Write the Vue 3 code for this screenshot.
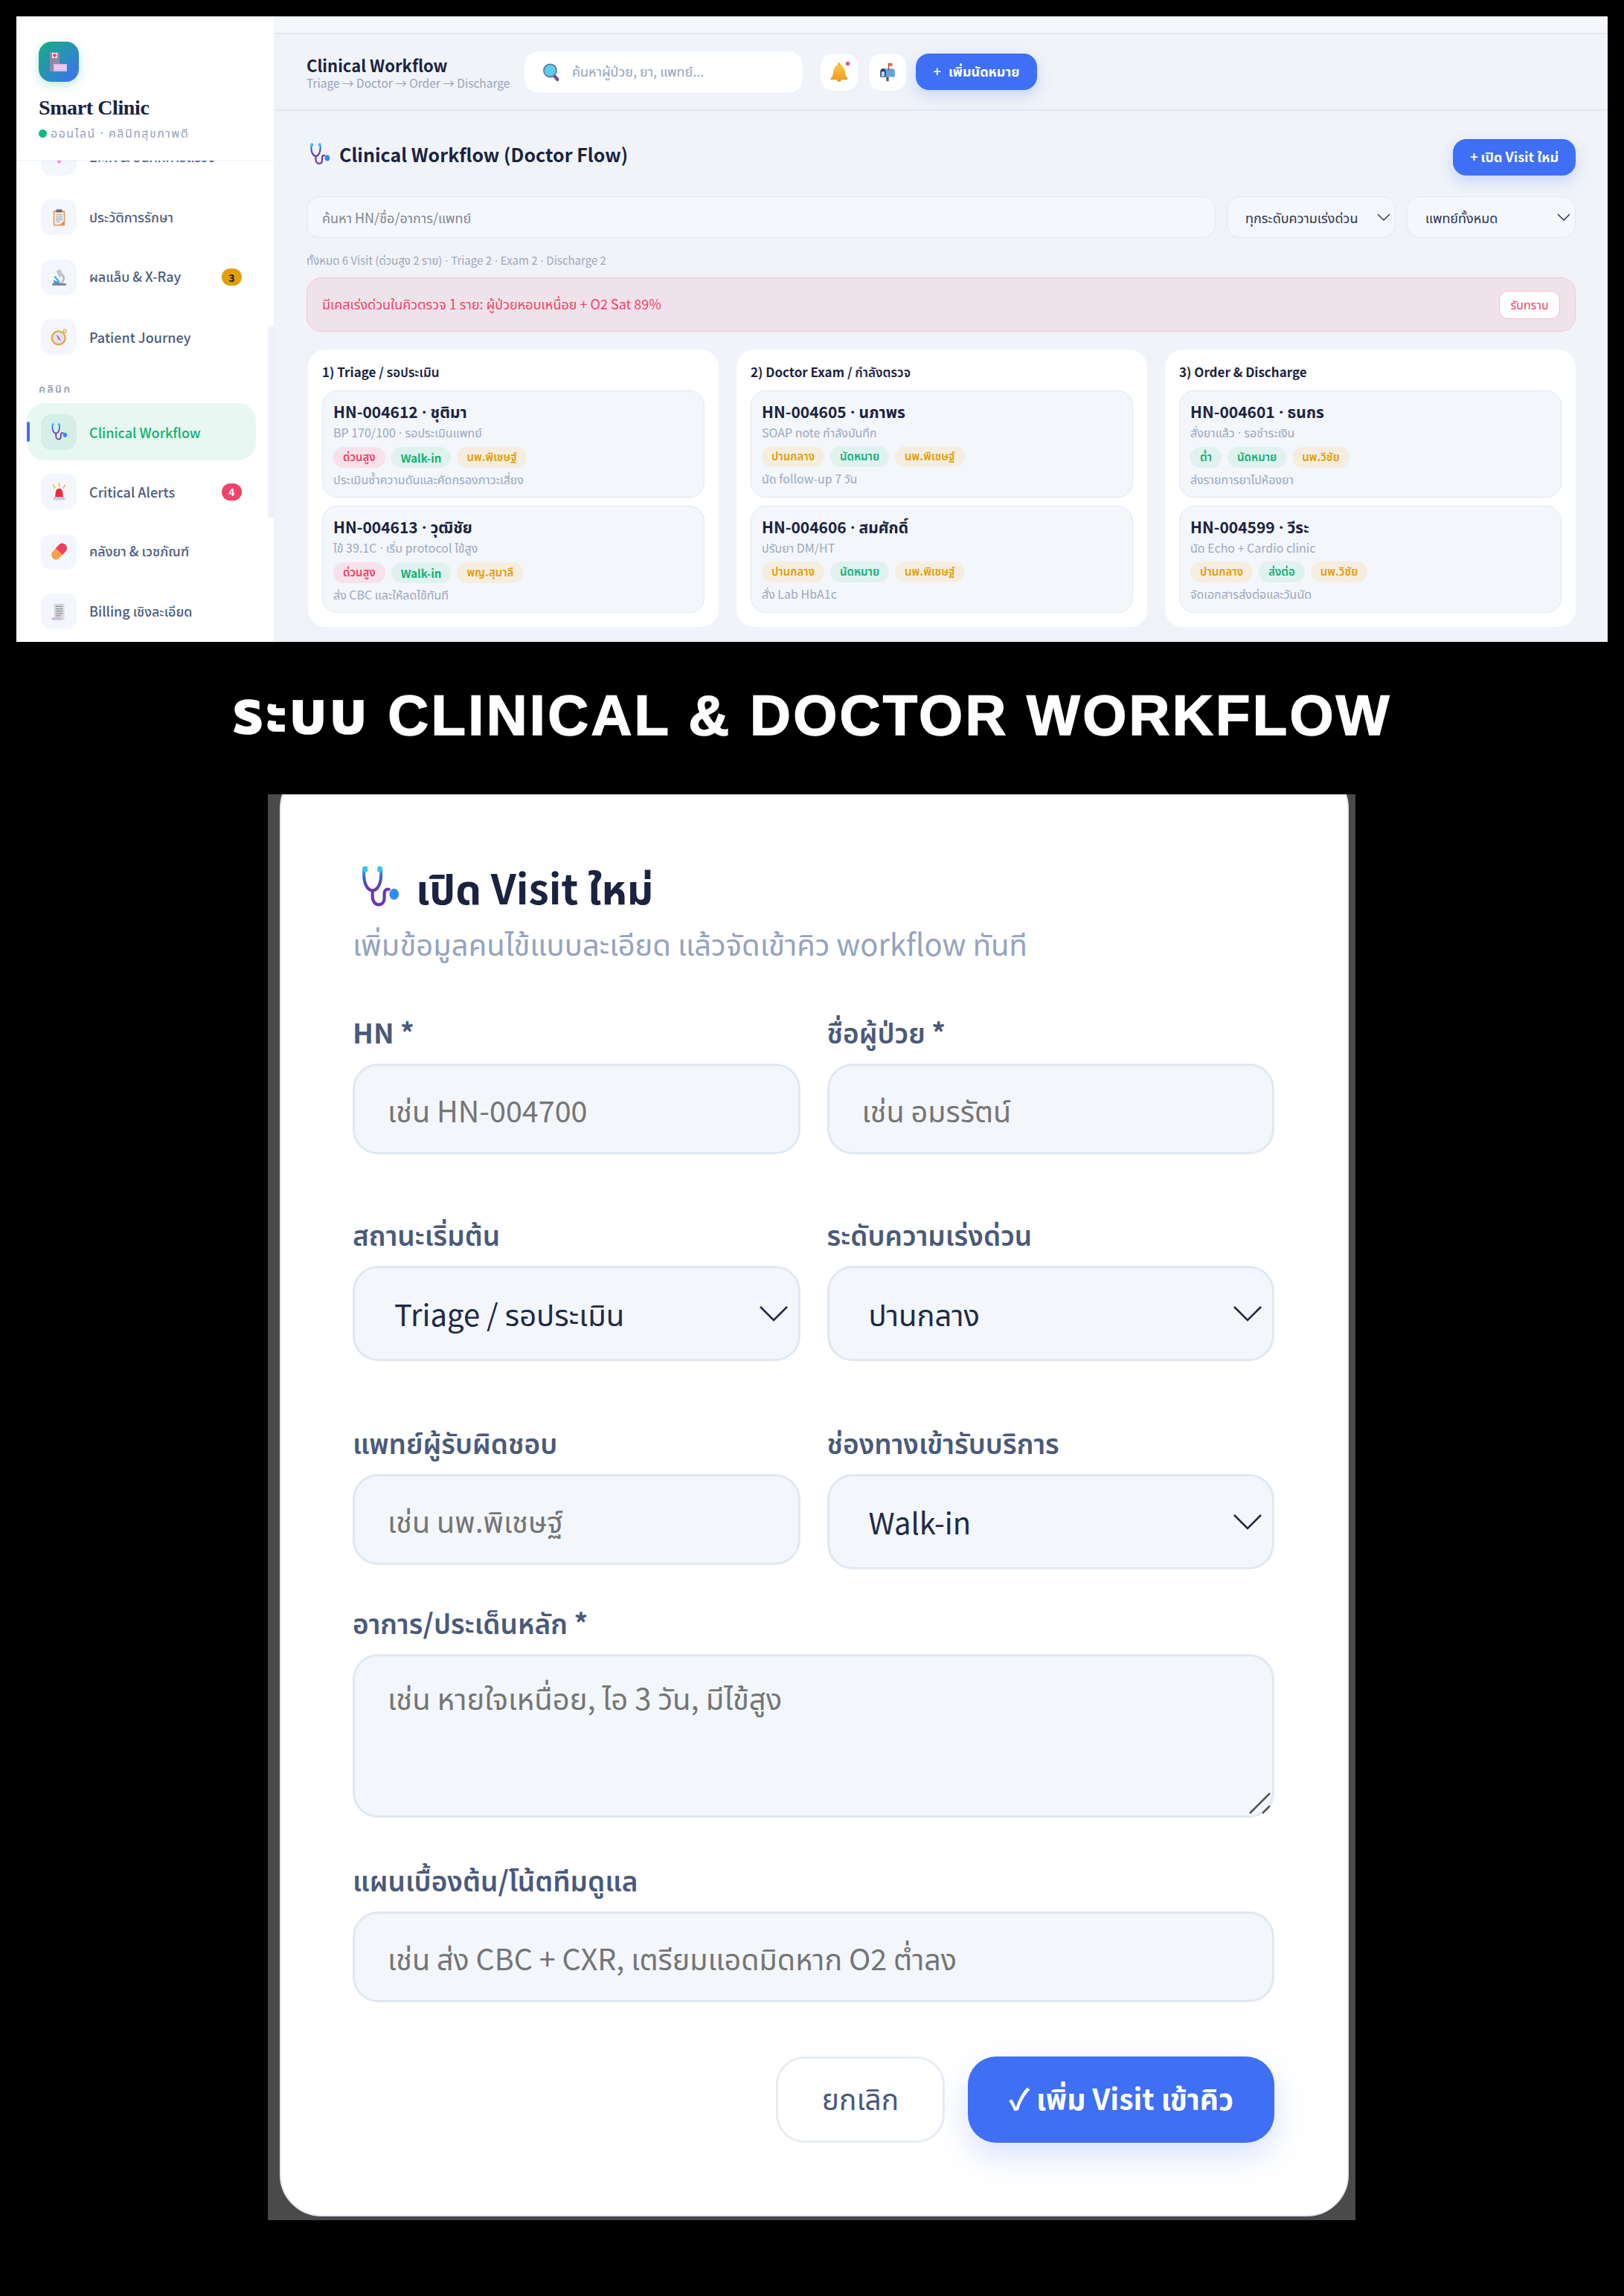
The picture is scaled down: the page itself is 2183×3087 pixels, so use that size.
<template>
  <div class="page">
    <!-- icon sheet -->
    <svg class="sprites" width="0" height="0">
      <defs>
        <linearGradient id="tube" x1="0" y1="0" x2="0" y2="1">
          <stop offset="0" stop-color="#38b6f5" />
          <stop offset="0.4" stop-color="#3c62c8" />
          <stop offset="1" stop-color="#6a35b0" />
        </linearGradient>
        <linearGradient id="bellGrad" x1="0" y1="0" x2="0" y2="1">
          <stop offset="0" stop-color="#fbc94b" />
          <stop offset="1" stop-color="#f49a22" />
        </linearGradient>
        <symbol id="i-steth" viewBox="0 0 32 32">
          <path d="M6 3H4.500C4 9 4.500 14 7 17c2 2.400 5 2.400 7 0 2.500-3 3-8 2.500-14H15" fill="none" stroke="url(#tube)" stroke-width="2.200" />
          <path d="M10.500 19v4c0 3.500 2 6 4.500 6s4-2 4-5v-3c0-2.500 2-4 4-2.500" fill="none" stroke="#6a35b0" stroke-width="2.200" />
          <rect x="4" y="1.500" width="3" height="4" rx="1" fill="#38c0f5" />
          <rect x="14" y="1.500" width="3" height="4" rx="1" fill="#38c0f5" />
          <ellipse cx="26" cy="21.500" rx="3.400" ry="4" fill="#2f8df0" />
        </symbol>
        <symbol id="i-brain" viewBox="0 0 32 32">
          <path d="M5 12c0-6 5-8 11-8s11 2 11 8c0 5-3 8-7 8l-2 6h-4l-2-6c-4 0-7-3-7-8z" fill="#f08ad8" />
        </symbol>
        <symbol id="i-clip" viewBox="0 0 32 32">
          <rect x="6" y="4" width="20" height="26" rx="2" fill="#e09a55" />
          <rect x="8" y="7" width="16" height="21" fill="#f3efe9" />
          <path d="M18 28l6-6v6z" fill="#d98c48" />
          <rect x="11" y="2" width="10" height="5" rx="1" fill="#6b6b78" />
          <path d="M10.500 11h11M10.500 14h11M10.500 17h11M10.500 20h11M10.500 23h7" stroke="#9a9aa8" stroke-width="1.200" />
        </symbol>
        <symbol id="i-scope" viewBox="0 0 32 32">
          <rect x="4" y="27" width="24" height="3.500" rx="1.500" fill="#7d7a96" />
          <path d="M20 9c5 3 7 8 5 13-1 3-3 5-5 5h-4c4-2 7-5 6-10z" fill="#b9b6c8" />
          <rect x="13" y="3" width="8" height="13" rx="3" transform="rotate(-28 17 9)" fill="#c6c3d2" />
          <path d="M6 21l11 4v2H7z" fill="#3aa3e8" />
          <path d="M8 15l8 9" stroke="#3aa3e8" stroke-width="2.500" />
        </symbol>
        <symbol id="i-compass" viewBox="0 0 32 32">
          <circle cx="26" cy="5" r="2.500" fill="none" stroke="#e6a93c" stroke-width="1.600" />
          <circle cx="15" cy="17" r="13" fill="#e8a845" />
          <circle cx="15" cy="17" r="10" fill="#dfe3ee" />
          <path d="M10 11l7 5-2 2z" fill="#8a8a9a" />
          <path d="M20 23l-7-5 2-2z" fill="#e0455a" />
        </symbol>
        <symbol id="i-siren" viewBox="0 0 32 32">
          <path d="M16 1v6M6 4l3 5M26 4l-3 5" stroke="#f0b429" stroke-width="2" stroke-linecap="round" />
          <path d="M9 25l1-9c.500-4 3-6 6-6s5.500 2 6 6l1 9z" fill="#ea2c3f" />
          <rect x="6" y="25" width="20" height="5" rx="1" fill="#d9c7e8" />
        </symbol>
        <symbol id="i-pill" viewBox="0 0 32 32">
          <g transform="rotate(42 16 16)">
            <rect x="8" y="0" width="16" height="32" rx="8" fill="#f7a24a" />
            <path d="M8 16V8a8 8 0 0 1 16 0v8z" fill="#ee3f66" />
          </g>
        </symbol>
        <symbol id="i-bill" viewBox="0 0 32 32">
          <path d="M7 2h18v25c0 2-1 3-3 3H5c2 0 2-1 2-3z" fill="#dcdbe3" />
          <rect x="3" y="26" width="18" height="4" rx="2" fill="#cdb9e0" />
          <path d="M10 7h12M10 11h12M10 15h12M10 19h12M10 23h9" stroke="#8d8d99" stroke-width="1.600" />
        </symbol>
        <symbol id="i-search" viewBox="0 0 32 32">
          <path d="M20 21l7 8" stroke="#7a4a95" stroke-width="6" stroke-linecap="round" />
          <circle cx="14" cy="13" r="11.500" fill="#5ccbec" stroke="#5b6b90" stroke-width="2" />
        </symbol>
        <symbol id="i-bell" viewBox="0 0 32 32">
          <path d="M16 5c-5 0-8 5-8.500 12-.300 3-2 6-3.500 7.500V27h24v-2.500c-1.500-1.500-3.200-4.500-3.500-7.500C24 10 21 5 16 5z" fill="url(#bellGrad)" />
          <circle cx="16" cy="4.500" r="2" fill="#f5ac2c" />
          <path d="M13 27a3 2.500 0 0 0 6 0z" fill="#e68a1c" />
        </symbol>
        <symbol id="i-mail" viewBox="0 0 32 32">
          <rect x="14" y="20" width="4" height="11" fill="#7a4a3a" />
          <path d="M8 10h16c3 0 4 2 4 5v9H8z" fill="#5aa7e4" />
          <path d="M4 15c0-3 2-5 4.500-5S13 12 13 15v9H4z" fill="#1f3f66" />
          <rect x="6" y="15" width="5" height="8" fill="#cfd8e6" />
          <rect x="17" y="1" width="1.600" height="12" fill="#c0392b" />
          <rect x="18" y="1" width="6" height="5" fill="#f06a3c" />
        </symbol>
      </defs>
    </svg>

    <section class="window">
      <aside class="sidebar">
        <div class="brand">
          <div class="logo">
            <svg viewBox="0 0 24 27" width="24" height="27">
              <rect x="0" y="0" width="13" height="26" fill="#8f8aa6" />
              <rect x="3" y="1" width="7" height="7" fill="#f6e9f0" />
              <path d="M6.500 2v5M4 4.500h5" stroke="#e8336e" stroke-width="1.800" />
              <rect x="5" y="16" width="18" height="10" fill="#e6b8e8" />
              <path d="M6 19h16M6 22h16" stroke="#f6e6f8" stroke-width="1.200" />
            </svg>
          </div>
          <div class="brand-name">Smart Clinic</div>
          <div class="brand-status">
            <span class="dot"></span>
            <span>ออนไลน์<span class="sep">{{ ' · ' }}</span>คลินิกสุขภาพดี</span>
          </div>
        </div>
        <nav class="nav">
          <template v-for="item in navItems" :key="item.label">
            <div v-if="item.section" class="nav-section">{{ item.label }}</div>
            <div v-else class="nav-item" :class="{ active: item.active }">
              <span class="nav-icon"><svg width="32" height="32"><use :href="'#' + item.icon" /></svg></span>
              <span class="nav-label">{{ item.label }}</span>
              <span v-if="item.badge" class="nav-badge" :class="item.badgeClass">{{ item.badge }}</span>
            </div>
          </template>
        </nav>
        <div class="scroll-thumb"></div>
      </aside>

      <main class="main">
        <div class="strip"></div>
        <header class="topbar">
          <div class="topbar-title">
            <div class="tb-name">Clinical Workflow</div>
            <div class="tb-sub">Triage → Doctor → Order → Discharge</div>
          </div>
          <div class="search">
            <svg width="24" height="30"><use href="#i-search" /></svg>
            <span>ค้นหาผู้ป่วย, ยา, แพทย์...</span>
          </div>
          <button class="round-btn bell">
            <svg width="30" height="30"><use href="#i-bell" /></svg>
            <i></i>
          </button>
          <button class="round-btn"><svg width="26" height="28"><use href="#i-mail" /></svg></button>
          <button class="add-btn"><b>+</b> เพิ่มนัดหมาย</button>
        </header>

        <div class="content">
          <div class="head-row">
            <h1><svg width="32" height="32"><use href="#i-steth" /></svg>Clinical Workflow (Doctor Flow)</h1>
            <button class="visit-btn">+ เปิด Visit ใหม่</button>
          </div>
          <div class="filters">
            <input class="f-input" placeholder="ค้นหา HN/ชื่อ/อาการ/แพทย์" />
            <select class="f-select"><option>ทุกระดับความเร่งด่วน</option></select>
            <select class="f-select"><option>แพทย์ทั้งหมด</option></select>
          </div>
          <div class="summary">
            <template v-for="(p, i) in split(summary)" :key="i"><span v-if="i" class="sep">{{ ' · ' }}</span>{{ p }}</template>
          </div>
          <div class="alert">
            <span>มีเคสเร่งด่วนในคิวตรวจ 1 ราย: ผู้ป่วยหอบเหนื่อย + O2 Sat 89%</span>
            <button>รับทราบ</button>
          </div>
          <div class="board">
            <div v-for="col in columns" :key="col.title" class="column">
              <div class="col-title">{{ col.title }}</div>
              <div v-for="c in col.cards" :key="c.hn" class="card">
                <div class="card-title">{{ c.hn }}<span class="sep">{{ ' · ' }}</span>{{ c.name }}</div>
                <div class="card-sub">
                  <template v-for="(p, i) in split(c.sub)" :key="i"><span v-if="i" class="sep">{{ ' · ' }}</span>{{ p }}</template>
                </div>
                <div class="tags">
                  <span v-for="t in c.tags" :key="t[0]" class="tag" :class="t[1]">{{ t[0] }}</span>
                </div>
                <div class="card-sub">{{ c.note }}</div>
              </div>
            </div>
          </div>
        </div>
      </main>
    </section>

    <h2 class="banner"><span class="th">ระบบ</span>&nbsp;CLINICAL &amp; DOCTOR WORKFLOW</h2>

    <section class="backdrop">
      <form class="modal" @submit.prevent>
        <div class="modal-title"><svg width="60" height="60"><use href="#i-steth" /></svg>เปิด Visit ใหม่</div>
        <p class="modal-sub">เพิ่มข้อมูลคนไข้แบบละเอียด แล้วจัดเข้าคิว workflow ทันที</p>

        <div class="grid">
          <label class="field row1">
            <span>HN *</span>
            <input placeholder="เช่น HN-004700" />
          </label>
          <label class="field row1">
            <span>ชื่อผู้ป่วย *</span>
            <input placeholder="เช่น อมรรัตน์" />
          </label>
          <label class="field row2">
            <span>สถานะเริ่มต้น</span>
            <select><option>Triage / รอประเมิน</option></select>
          </label>
          <label class="field row2">
            <span>ระดับความเร่งด่วน</span>
            <select><option>ปานกลาง</option></select>
          </label>
          <label class="field row3">
            <span>แพทย์ผู้รับผิดชอบ</span>
            <input placeholder="เช่น นพ.พิเชษฐ์" />
          </label>
          <label class="field row3">
            <span>ช่องทางเข้ารับบริการ</span>
            <select><option>Walk-in</option></select>
          </label>
        </div>

        <label class="field wide">
          <span>อาการ/ประเด็นหลัก *</span>
          <div class="ta-wrap">
            <textarea placeholder="เช่น หายใจเหนื่อย, ไอ 3 วัน, มีไข้สูง"></textarea>
            <svg class="grip" width="32" height="32" viewBox="0 0 32 32">
              <path d="M3 30L30 3M20 30l10-10" stroke="#555" stroke-width="2.500" />
            </svg>
          </div>
        </label>
        <label class="field plan">
          <span>แผนเบื้องต้น/โน้ตทีมดูแล</span>
          <input placeholder="เช่น ส่ง CBC + CXR, เตรียมแอดมิดหาก O2 ต่ำลง" />
        </label>

        <div class="actions">
          <button type="button" class="cancel">ยกเลิก</button>
          <button type="submit" class="submit">✓ เพิ่ม Visit เข้าคิว</button>
        </div>
      </form>
    </section>
  </div>
</template>

<script setup>
const summary = 'ทั้งหมด 6 Visit (ด่วนสูง 2 ราย) · Triage 2 · Exam 2 · Discharge 2'

// the CJK font's middle dot is too wide, so separators get their own span
const split = (text) => text.split(' · ')

const navItems = [
  { label: 'EMR & บันทึกการตรวจ', icon: 'i-brain' },
  { label: 'ประวัติการรักษา', icon: 'i-clip' },
  { label: 'ผลแล็บ & X-Ray', icon: 'i-scope', badge: 3, badgeClass: 'amber' },
  { label: 'Patient Journey', icon: 'i-compass' },
  { label: 'คลินิก', section: true },
  { label: 'Clinical Workflow', icon: 'i-steth', active: true },
  { label: 'Critical Alerts', icon: 'i-siren', badge: 4, badgeClass: 'red' },
  { label: 'คลังยา & เวชภัณฑ์', icon: 'i-pill' },
  { label: 'Billing เชิงละเอียด', icon: 'i-bill' }
]

const columns = [
  {
    title: '1) Triage / รอประเมิน',
    cards: [
      {
        hn: 'HN-004612', name: 'ชุติมา', sub: 'BP 170/100 · รอประเมินแพทย์',
        tags: [['ด่วนสูง', 'red'], ['Walk-in', 'green'], ['นพ.พิเชษฐ์', 'amber']],
        note: 'ประเมินซ้ำความดันและคัดกรองภาวะเสี่ยง'
      },
      {
        hn: 'HN-004613', name: 'วุฒิชัย', sub: 'ไข้ 39.1C · เริ่ม protocol ไข้สูง',
        tags: [['ด่วนสูง', 'red'], ['Walk-in', 'green'], ['พญ.สุมาลี', 'amber']],
        note: 'ส่ง CBC และให้ลดไข้ทันที'
      }
    ]
  },
  {
    title: '2) Doctor Exam / กำลังตรวจ',
    cards: [
      {
        hn: 'HN-004605', name: 'นภาพร', sub: 'SOAP note กำลังบันทึก',
        tags: [['ปานกลาง', 'amber'], ['นัดหมาย', 'green'], ['นพ.พิเชษฐ์', 'amber']],
        note: 'นัด follow-up 7 วัน'
      },
      {
        hn: 'HN-004606', name: 'สมศักดิ์', sub: 'ปรับยา DM/HT',
        tags: [['ปานกลาง', 'amber'], ['นัดหมาย', 'green'], ['นพ.พิเชษฐ์', 'amber']],
        note: 'สั่ง Lab HbA1c'
      }
    ]
  },
  {
    title: '3) Order & Discharge',
    cards: [
      {
        hn: 'HN-004601', name: 'ธนกร', sub: 'สั่งยาแล้ว · รอชำระเงิน',
        tags: [['ต่ำ', 'green'], ['นัดหมาย', 'green'], ['นพ.วิชัย', 'amber']],
        note: 'ส่งรายการยาไปห้องยา'
      },
      {
        hn: 'HN-004599', name: 'วีระ', sub: 'นัด Echo + Cardio clinic',
        tags: [['ปานกลาง', 'amber'], ['ส่งต่อ', 'green'], ['นพ.วิชัย', 'amber']],
        note: 'จัดเอกสารส่งต่อและวันนัด'
      }
    ]
  }
]
</script>

<style>
html,
body {
  background: #000;
}
</style>

<style scoped>
.page {
  width: 2183px;
  height: 3087px;
  background: #000;
  font-family: "Noto Sans CJK SC", "Noto Sans Thai", sans-serif;
  padding-top: 22px;
  box-sizing: border-box;
  overflow: hidden;
}

.sprites {
  position: absolute;
}

.sep {
  font-family: "Noto Sans", sans-serif;
  white-space: pre;
}

button,
input,
select,
textarea {
  font-family: inherit;
  box-sizing: border-box;
}

.window {
  display: flex;
  width: 2139px;
  height: 841px;
  margin-left: 22px;
  overflow: hidden;
  background: #f0f3f8;
}

/* Sidebar */
.sidebar {
  position: relative;
  width: 346px;
  flex-shrink: 0;
  background: #fff;
  overflow: hidden;
}

.brand {
  position: relative;
  z-index: 1;
  height: 194px;
  box-sizing: border-box;
  padding: 34px 30px 0 30px;
  background: #fff;
  border-bottom: 1px solid #edf1f7;
}

.logo {
  display: flex;
  align-items: center;
  justify-content: center;
  width: 54px;
  height: 54px;
  border-radius: 17px;
  background: linear-gradient(135deg, #12b07e, #3f6ff5);
  box-shadow: 0 4px 14px rgba(16, 185, 129, 0.28);
}

.brand-name {
  margin-top: 18px;
  font-family: "Liberation Serif", serif;
  font-size: 28px;
  font-weight: 700;
  line-height: 34px;
  letter-spacing: -0.4px;
  color: #1a2340;
}

.brand-status {
  display: flex;
  align-items: center;
  margin-top: 4px;
  font-size: 16px;
  letter-spacing: 1.500px;
  color: #94a3bd;
}

.dot {
  width: 11px;
  height: 11px;
  margin-right: 5px;
  border-radius: 50%;
  background: #12b981;
}

.nav {
  margin-top: -43px;
  padding: 0 24px 0 14px;
}

.nav-item {
  display: flex;
  align-items: center;
  height: 77px;
  margin-bottom: 3.500px;
  padding-left: 19px;
  border-radius: 24px;
  position: relative;
}

.nav-item.active {
  background: #e9f7f2;
}

.nav-item.active::before {
  content: "";
  position: absolute;
  left: 0;
  top: 25px;
  width: 4px;
  height: 27px;
  border-radius: 3px;
  background: #3f6ff5;
}

.nav-icon {
  display: flex;
  align-items: center;
  justify-content: center;
  width: 48px;
  height: 48px;
  margin-right: 17px;
  border-radius: 14px;
  background: #f3f6fc;
}

.active .nav-icon {
  background: #d5eee7;
}

.nav-icon svg {
  width: 25px;
  height: 25px;
}

.nav-label {
  flex: 1;
  font-size: 18px;
  font-weight: 500;
  color: #4d5c7c;
}

.active .nav-label {
  color: #10b177;
}

.nav-badge {
  display: flex;
  align-items: center;
  justify-content: center;
  width: 27px;
  height: 23px;
  margin-right: 19px;
  border-radius: 12px;
  font-size: 14px;
  font-weight: 700;
}

.nav-badge.amber {
  background: #e39d05;
  color: #1e2238;
}

.nav-badge.red {
  background: #f0436a;
  color: #fff;
}

.nav-section {
  height: 50px;
  padding: 20px 0 0 16px;
  box-sizing: border-box;
  font-size: 14px;
  font-weight: 600;
  letter-spacing: 2.500px;
  color: #94a3bd;
  margin-top: -3px;
}

.scroll-thumb {
  position: absolute;
  top: 416px;
  right: 0;
  width: 8px;
  height: 259px;
  border-radius: 4px 0 0 4px;
  background: #eef2f8;
}

/* Main */
.main {
  flex: 1;
  min-width: 0;
  background: #f0f3f8;
}

.strip {
  height: 24px;
  background: #f3f6fa;
  border-bottom: 2px solid #e3e9f2;
  box-sizing: border-box;
}

.topbar {
  display: flex;
  align-items: center;
  height: 103px;
  padding: 0 44px;
  border-bottom: 2px solid #e3e9f2;
  box-sizing: border-box;
}

.topbar-title {
  width: 293px;
  flex-shrink: 0;
}

.tb-name {
  font-size: 22px;
  font-weight: 600;
  line-height: 28px;
  color: #1a2340;
}

.tb-sub {
  font-size: 15.500px;
  line-height: 20px;
  color: #94a3bd;
}

.search {
  display: flex;
  align-items: center;
  gap: 16px;
  width: 374px;
  height: 56px;
  padding-left: 24px;
  box-sizing: border-box;
  border-radius: 20px;
  background: #fff;
  font-size: 18px;
  color: #94a3bd;
}

.round-btn {
  position: relative;
  display: flex;
  align-items: center;
  justify-content: center;
  width: 52px;
  height: 52px;
  margin-left: 13px;
  padding: 0;
  border: 1px solid #edf1f7;
  border-radius: 18px;
  background: #fff;
}

.bell {
  margin-left: 23px;
}

.bell i {
  position: absolute;
  top: 11px;
  right: 11px;
  width: 5px;
  height: 5px;
  border-radius: 50%;
  background: #f0436a;
  box-shadow: 0 0 0 3px #f3f6fa;
}

.add-btn,
.visit-btn {
  border: none;
  border-radius: 18px;
  background: #3f6ff5;
  color: #fff;
  font-weight: 700;
  box-shadow: 0 8px 20px rgba(63, 111, 245, 0.22);
}

.add-btn {
  width: 163px;
  height: 49px;
  margin-left: 12px;
  font-size: 18px;
}

.add-btn b {
  margin-right: 6px;
  font-weight: 500;
}

.content {
  padding: 38px 43px 0 44px;
}

.head-row {
  display: flex;
  align-items: center;
  justify-content: space-between;
  height: 49px;
}

h1 {
  display: flex;
  align-items: center;
  gap: 10px;
  margin: -10px 0 0 2px;
  font-size: 25px;
  font-weight: 600;
  color: #1a2340;
}

.visit-btn {
  width: 165px;
  height: 49px;
  font-size: 18px;
}

.filters {
  display: grid;
  grid-template-columns: 1fr 227px 227px;
  gap: 15px;
  margin-top: 28px;
}

.f-input,
.f-select {
  height: 56px;
  padding: 0 20px;
  border: 1px solid #e3e9f3;
  border-radius: 18px;
  background-color: #f4f7fb;
  font-size: 18px;
  color: #2a3552;
  outline: none;
}

.f-select {
  appearance: none;
  padding-left: 24px;
  background-image: url("data:image/svg+xml,%3Csvg xmlns='http://www.w3.org/2000/svg' viewBox='0 0 18 10'%3E%3Cpath d='M1 1l8 8 8-8' fill='none' stroke='%231e2a48' stroke-width='1.300'/%3E%3C/svg%3E");
  background-repeat: no-repeat;
  background-size: 18px 10px;
  background-position: right 6px center;
}

.f-input::placeholder {
  color: #7f8592;
}

.summary {
  margin-top: 18px;
  font-size: 15px;
  line-height: 24px;
  color: #9aa8c1;
}

.alert {
  display: flex;
  align-items: center;
  justify-content: space-between;
  height: 73px;
  margin-top: 11px;
  padding: 0 20px;
  box-sizing: border-box;
  border: 1px solid #f5c5d3;
  border-radius: 20px;
  background: #f0e2ea;
  font-size: 18px;
  color: #f0436a;
}

.alert button {
  width: 82px;
  height: 38px;
  border: 1px solid #f9bccb;
  border-radius: 12px;
  background: #fff;
  font-size: 16px;
  color: #f0436a;
}

.board {
  display: grid;
  grid-template-columns: repeat(3, 1fr);
  gap: 24px;
  margin-top: 24px;
  margin-left: 2px;
}

.column {
  height: 373px;
  padding: 20px 19px 0 19px;
  box-sizing: border-box;
  border-radius: 24px;
  background: #fff;
}

.col-title {
  margin-bottom: 15px;
  font-size: 17px;
  font-weight: 600;
  line-height: 20px;
  color: #1a2340;
}

.card {
  height: 144px;
  margin-bottom: 11px;
  padding: 12px 14px 0 14px;
  box-sizing: border-box;
  border: 1px solid #dfe7f4;
  border-radius: 20px;
  background: #f3f6fb;
}

.card-title {
  font-size: 21px;
  font-weight: 700;
  line-height: 30px;
  color: #1a2340;
}

.card-sub {
  font-size: 16px;
  line-height: 24px;
  color: #9aa8c1;
}

.tags {
  display: flex;
  gap: 8px;
  margin: 7px 0 3px 0;
}

.tag {
  display: flex;
  align-items: center;
  height: 28px;
  padding: 0 13px;
  border-radius: 14px;
  font-size: 15px;
  font-weight: 600;
}

.tag.red {
  background: #f7e2ea;
  color: #f0436a;
}

.tag.green {
  background: #dff2ee;
  color: #10b177;
}

.tag.amber {
  background: #f5eee0;
  color: #e39d05;
}

/* Banner */
.banner {
  height: 206px;
  margin: 0;
  padding-bottom: 10px;
  box-sizing: border-box;
  display: flex;
  align-items: center;
  justify-content: center;
  font-size: 76px;
  font-weight: 700;
  letter-spacing: 3.300px;
  color: #fff;
  -webkit-text-stroke: 1.500px #fff;
  font-family: "Liberation Sans", "Noto Sans Thai", sans-serif;
}

.banner .th {
  font-size: 80px;
}

/* Visit form */
.backdrop {
  width: 1462px;
  height: 1917px;
  margin-left: 360px;
  margin-top: -1px;
  overflow: hidden;
  background: #4a4a4a;
}

.modal {
  position: relative;
  width: 1437px;
  height: 1949px;
  margin: -37px 0 0 16px;
  padding: 121px 98px 0 96px;
  box-sizing: border-box;
  border: 2px solid #e3e9f2;
  border-radius: 56px;
  background: #fff;
}

.modal-title {
  display: flex;
  align-items: center;
  gap: 18px;
  font-size: 55px;
  font-weight: 700;
  line-height: 76px;
  color: #1a2340;
}

.modal-title svg {
  margin-left: 7px;
}

.modal-sub {
  margin: 8px 0 0 0;
  font-size: 40px;
  line-height: 60px;
  color: #94a3c0;
}

.grid {
  display: grid;
  grid-template-columns: 1fr 1fr;
  column-gap: 36px;
  margin-top: 70px;
}

.field {
  display: block;
}

.row1 {
  height: 272px;
}

.row2 {
  height: 280px;
}

.row3 {
  height: 242px;
}

.wide {
  height: 346px;
}

.plan {
  height: 257px;
}

.field span {
  display: block;
  height: 62px;
  font-size: 37px;
  font-weight: 600;
  line-height: 38px;
  color: #4a5a7a;
}

.field input,
.field select,
.field textarea {
  display: block;
  width: 100%;
  height: 122px;
  padding: 0 44px;
  border: 3px solid #e1e8f3;
  border-radius: 34px;
  background-color: #f3f6fb;
  font-size: 40px;
  color: #1e2a48;
  outline: none;
}

.field input {
  font-size: 39.500px;
}

.field select {
  height: 128px;
  appearance: none;
  padding-left: 53px;
  background-image: url("data:image/svg+xml,%3Csvg xmlns='http://www.w3.org/2000/svg' viewBox='0 0 38 21'%3E%3Cpath d='M1 1l18 18 18-18' fill='none' stroke='%231e2a48' stroke-width='2.600'/%3E%3C/svg%3E");
  background-repeat: no-repeat;
  background-size: 38px 21px;
  background-position: right 14px center;
}

.field input::placeholder,
.field textarea::placeholder {
  color: #757575;
}

.ta-wrap {
  position: relative;
}

.field textarea {
  height: 220px;
  padding: 26px 44px;
  resize: none;
}

.grip {
  position: absolute;
  right: 4px;
  bottom: 4px;
}

.actions {
  display: flex;
  justify-content: flex-end;
  gap: 31px;
}

.cancel,
.submit {
  height: 116px;
  border-radius: 38px;
  font-size: 39px;
}

.cancel {
  width: 227px;
  border: 3px solid #e7ecf5;
  background: #fff;
  color: #4a5a7a;
}

.submit {
  width: 412px;
  border: none;
  background: #3f6ff5;
  color: #fff;
  font-weight: 700;
  box-shadow: 0 18px 44px rgba(63, 111, 245, 0.2);
}
</style>
